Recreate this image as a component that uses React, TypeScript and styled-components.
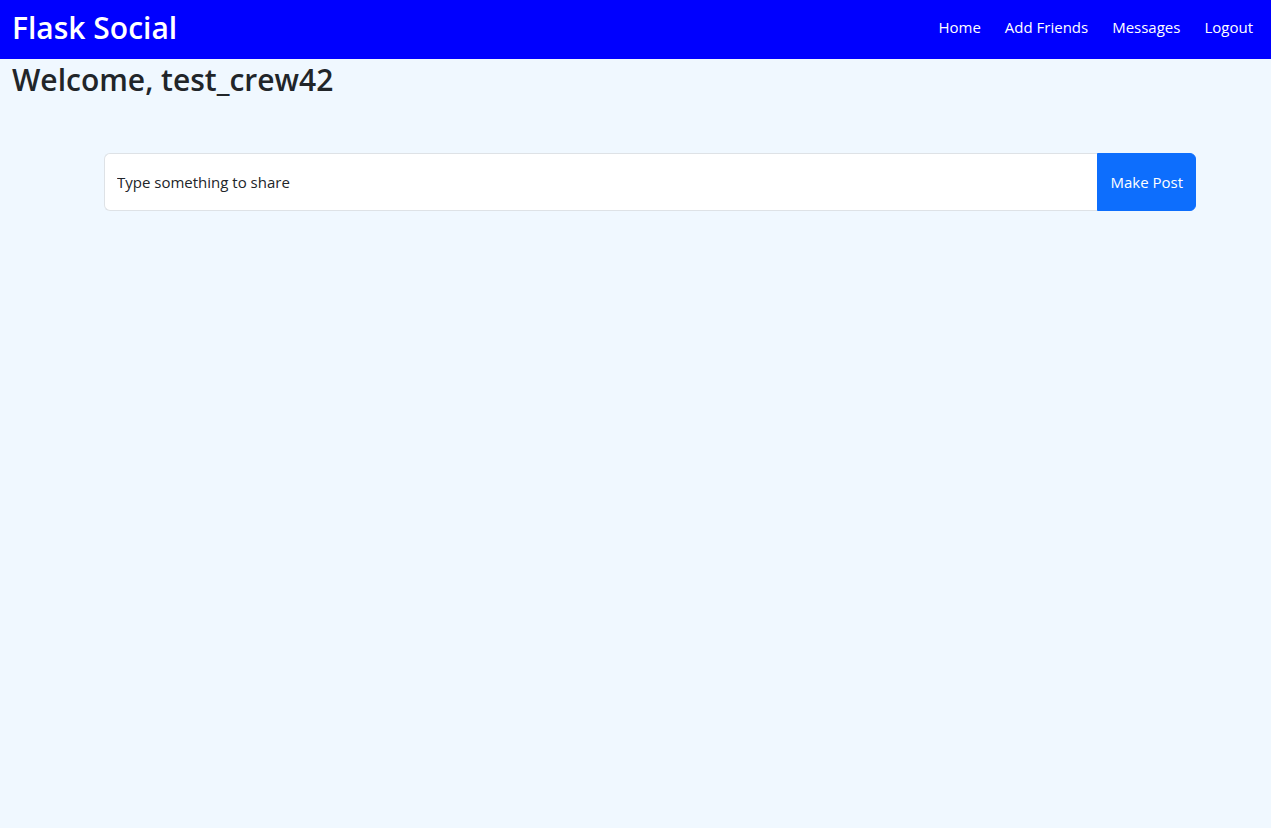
import React from "react";
import styled, { createGlobalStyle } from "styled-components";

const GlobalStyle = createGlobalStyle`
  html, body {
    margin: 0;
    padding: 0;
    background: #f0f8ff;
    font-family: "Open Sans", "Liberation Sans", sans-serif;
    color: #212529;
  }
  * { box-sizing: border-box; }
`;

const Page = styled.div`
  min-height: 828px;
  background: #f0f8ff;
`;

const NavBar = styled.nav`
  height: 59px;
  background: #0000ff;
  display: flex;
  align-items: center;
  justify-content: space-between;
  padding: 0 18px 0 12px;
`;

const Brand = styled.a`
  color: #ffffff;
  font-size: 30px;
  font-weight: 600;
  text-decoration: none;
  line-height: 1;
  padding-bottom: 3px;
`;

const NavLinks = styled.div`
  display: flex;
  align-items: center;
  gap: 24px;
  padding-bottom: 6px;
`;

const NavLink = styled.a`
  color: #ffffff;
  font-size: 15px;
  text-decoration: none;
  line-height: 24px;
`;

const Main = styled.main`
  padding: 2px 12px 0;
`;

const Heading = styled.h2`
  margin: 0;
  font-size: 30px;
  font-weight: 600;
  line-height: 38px;
  color: #212529;
`;

const PostForm = styled.form`
  display: flex;
  margin: 54px 63px 0 92px;
`;

const PostInput = styled.input`
  flex: 1;
  height: 58px;
  padding: 16px 12px;
  font-family: inherit;
  font-size: 15px;
  color: #212529;
  background: #ffffff;
  border: 1px solid #dee2e6;
  border-right: none;
  border-radius: 6px 0 0 6px;
  outline: none;
  &::placeholder {
    color: #212529;
    opacity: 1;
  }
`;

const PostButton = styled.button`
  height: 58px;
  padding: 0 12px;
  font-family: inherit;
  font-size: 15px;
  color: #ffffff;
  background: #0d6efd;
  border: 1px solid #0d6efd;
  border-radius: 0 6px 6px 0;
  cursor: pointer;
`;

export default function App() {
  return (
    <Page>
      <GlobalStyle />
      <NavBar>
        <Brand href="#">Flask Social</Brand>
        <NavLinks>
          <NavLink href="#">Home</NavLink>
          <NavLink href="#">Add Friends</NavLink>
          <NavLink href="#">Messages</NavLink>
          <NavLink href="#">Logout</NavLink>
        </NavLinks>
      </NavBar>
      <Main>
        <Heading>Welcome, test_crew42</Heading>
        <PostForm onSubmit={(e) => e.preventDefault()}>
          <PostInput placeholder="Type something to share" />
          <PostButton type="submit">Make Post</PostButton>
        </PostForm>
      </Main>
    </Page>
  );
}
